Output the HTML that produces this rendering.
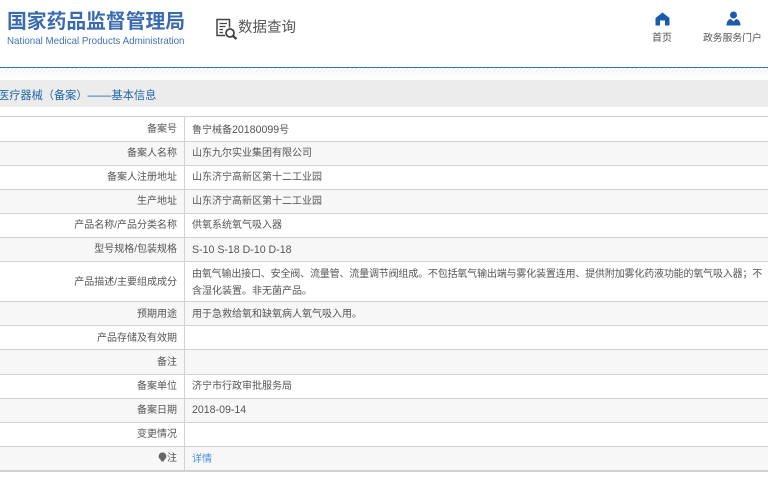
<!DOCTYPE html>
<html lang="zh">
<head>
<meta charset="utf-8">
<style>
html,body{margin:0;padding:0;background:#fff;}
body{width:768px;height:477px;overflow:hidden;position:relative;font-family:"Liberation Sans","Noto Sans CJK SC",sans-serif;color:#555;}
div{position:absolute;white-space:nowrap;}
.bg{left:0;width:768px;}
.l{left:0;width:768px;height:1px;background:#d2d2d2;}
.k{left:0;width:177px;text-align:right;font-size:10px;line-height:16px;filter:blur(.25px);}
.v{left:192px;font-size:10px;line-height:16px;filter:blur(.25px);}
.n{font-size:10.6px;}
</style>
</head>
<body>
<div style="left:7px;top:8px;font-size:19.8px;line-height:28px;font-weight:700;color:#3a6bb0;filter:blur(.3px);">国家药品监督管理局</div>
<div style="left:7px;top:34px;font-size:9.78px;line-height:15px;color:#4272b4;filter:blur(.2px);">National Medical Products Administration</div>
<svg style="position:absolute;left:215px;top:17px;" width="24" height="25" viewBox="0 0 24 25" fill="none" stroke="#444" stroke-width="1.500">
<path d="M10 18.500H2V2.500h12.500v8"/>
<path d="M4.500 6.500h7.500M4.500 9.500h6M4.500 12.500h3.500M4.500 15.500h3.500" stroke-width="1.300"/>
<circle cx="15" cy="16" r="4" stroke-width="1.800"/>
<path d="M18 19l3.500 3" stroke-width="2.400"/>
</svg>
<div style="left:238px;font-size:14.500px;line-height:22px;color:#555;filter:blur(.25px);top:17px;">数据查询</div>

<svg style="position:absolute;left:655px;top:12px;" width="15" height="14" viewBox="0 0 15 14"><path d="M7.500 0.500L14.500 6V13.500H10V8.500H5V13.500H0.500V6Z" fill="#1a5cab"/></svg>
<div style="left:652px;top:31px;font-size:10px;line-height:15px;filter:blur(.25px);">首页</div>
<svg style="position:absolute;left:726px;top:11px;" width="15" height="15" viewBox="0 0 15 15"><circle cx="7.500" cy="4" r="3.500" fill="#1a5cab"/><path d="M0.500 14.500C0.500 10 3 8 5 8L7.500 10.500L10 8C12 8 14.500 10 14.500 14.500Z" fill="#1a5cab"/></svg>
<div style="left:703px;top:31px;font-size:9.800px;line-height:15px;filter:blur(.25px);">政务服务门户</div>

<div class="bg" style="top:67px;height:1px;background:#2a78a8;"></div>
<div class="bg" style="top:68px;height:4px;background:repeating-linear-gradient(135deg,#ececec 0 1px,#fff 1px 3px);"></div>
<div class="bg" style="top:72px;height:8px;background:linear-gradient(#fafafa,#fff);"></div>
<div class="bg" style="top:80px;height:27px;background:#ececec;"></div>
<div style="left:-2px;top:86px;font-size:11.200px;line-height:18px;color:#1f67a6;filter:blur(.25px);">医疗器械（备案）<span style="font-size:12px;">——</span>基本信息</div>

<div class="bg" style="top:142px;height:23px;background:#f7f7f7;"></div>
<div class="bg" style="top:190px;height:23px;background:#f7f7f7;"></div>
<div class="bg" style="top:238px;height:23px;background:#f7f7f7;"></div>
<div class="bg" style="top:302px;height:23px;background:#f7f7f7;"></div>
<div class="bg" style="top:350px;height:24px;background:#f7f7f7;"></div>
<div class="bg" style="top:399px;height:23px;background:#f7f7f7;"></div>
<div class="bg" style="top:447px;height:23px;background:#f7f7f7;"></div>

<div class="l" style="top:116px;"></div>
<div class="l" style="top:141px;"></div>
<div class="l" style="top:165px;"></div>
<div class="l" style="top:189px;"></div>
<div class="l" style="top:213px;"></div>
<div class="l" style="top:237px;"></div>
<div class="l" style="top:261px;"></div>
<div class="l" style="top:301px;"></div>
<div class="l" style="top:325px;"></div>
<div class="l" style="top:349px;"></div>
<div class="l" style="top:374px;"></div>
<div class="l" style="top:398px;"></div>
<div class="l" style="top:422px;"></div>
<div class="l" style="top:446px;"></div>
<div class="l" style="top:470px;height:2px;"></div>
<div style="left:184px;top:116px;width:1px;height:355px;background:#d2d2d2;"></div>

<div class="k" style="top:122px;">备案号</div><div class="v" style="top:122px;">鲁宁械备<span class="n">20180099</span>号</div>
<div class="k" style="top:146px;">备案人名称</div><div class="v" style="top:146px;">山东九尔实业集团有限公司</div>
<div class="k" style="top:170px;">备案人注册地址</div><div class="v" style="top:170px;">山东济宁高新区第十二工业园</div>
<div class="k" style="top:194px;">生产地址</div><div class="v" style="top:194px;">山东济宁高新区第十二工业园</div>
<div class="k" style="top:218px;">产品名称/产品分类名称</div><div class="v" style="top:218px;">供氧系统氧气吸入器</div>
<div class="k" style="top:242px;">型号规格/包装规格</div><div class="v n" style="top:242px;">S-10 S-18 D-10 D-18</div>
<div class="k" style="top:275px;">产品描述/主要组成成分</div>
<div class="v" style="top:267px;letter-spacing:-.17px;">由氧气输出接口、安全阀、流量管、流量调节阀组成。不包括氧气输出端与雾化装置连用、提供附加雾化药液功能的氧气吸入器；不</div>
<div class="v" style="top:284px;">含湿化装置。非无菌产品。</div>
<div class="k" style="top:307px;">预期用途</div><div class="v" style="top:307px;">用于急救给氧和缺氧病人氧气吸入用。</div>
<div class="k" style="top:331px;">产品存储及有效期</div>
<div class="k" style="top:355px;">备注</div>
<div class="k" style="top:379px;">备案单位</div><div class="v" style="top:379px;">济宁市行政审批服务局</div>
<div class="k" style="top:403px;">备案日期</div><div class="v n" style="top:402px;">2018-09-14</div>
<div class="k" style="top:427px;">变更情况</div>
<svg style="position:absolute;left:158px;top:452px;" width="9" height="11" viewBox="0 0 9 11"><path d="M4.500 0.500a3.800 3.800 0 0 1 2.200 6.900L5.500 9.500h-2L2.300 7.400A3.800 3.800 0 0 1 4.500 0.500Z" fill="#666"/></svg>
<div class="k" style="top:451px;">注</div><div class="v" style="top:452px;color:#4a90e2;">详情</div>
</body>
</html>
